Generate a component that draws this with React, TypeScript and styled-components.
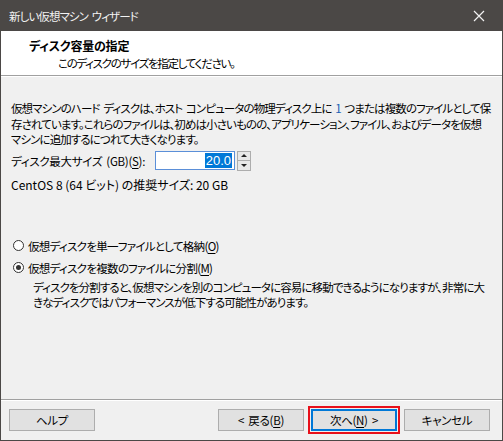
import React, { useState } from 'react';
import styled, { createGlobalStyle } from 'styled-components';

const GlobalStyle = createGlobalStyle`
	html, body {
		margin: 0;
		padding: 0;
		background: #f0f0f0;
	}
	body {
		font-family: "Noto Sans CJK JP", "Liberation Sans", sans-serif;
		font-feature-settings: "palt";
		font-size: 11.5px;
		letter-spacing: -0.9px;
		word-spacing: 2px;
		color: #000;
	}
`;

const Window = styled.div`
	width: 503px;
	height: 441px;
	box-sizing: border-box;
	display: flex;
	flex-direction: column;
	border: 1px solid #4b4846;
	border-top: none;
	background: #f0f0f0;
	overflow: hidden;
`;

const TitleBar = styled.div`
	height: 31px;
	flex: none;
	display: flex;
	align-items: center;
	padding-left: 8px;
	background: #4b4846;
	color: #f2f2f2;
`;

const TitleText = styled.div`
	flex: 1;
`;

const CloseButton = styled.div`
	width: 46px;
	height: 31px;
	display: flex;
	align-items: center;
	justify-content: center;
`;

const Header = styled.div`
	height: 45px;
	flex: none;
	box-sizing: border-box;
	background: #fff;
	border-bottom: 1px solid #a0a0a0;
	box-shadow: 0 1px 0 #fff;
	padding: 6px 0 0 28px;
`;

const HeaderTitle = styled.div`
	font-weight: bold;
	font-size: 12px;
	letter-spacing: -0.2px;
	line-height: 18px;
`;

const HeaderSub = styled.div`
	padding-left: 29px;
	line-height: 17px;
	letter-spacing: -1.3px;
`;

const Body = styled.div`
	flex: 1;
	padding: 25px 10px 0 10px;
	display: flex;
	flex-direction: column;
`;

const Paragraph = styled.div<{ $indent?: number }>`
	line-height: 15.5px;
	white-space: nowrap;
	padding-left: ${({ $indent }) => $indent ?? 0}px;
`;

const SizeRow = styled.div`
	display: flex;
	align-items: center;
	margin-top: 2px;
	height: 22px;
`;

const Label = styled.span`
	width: 144px;
	white-space: nowrap;
	letter-spacing: -0.3px;
`;

const SpinBox = styled.div`
	display: flex;
	align-items: center;
	gap: 2px;
`;

const SpinInput = styled.div`
	width: 80px;
	height: 19px;
	box-sizing: border-box;
	border: 1px solid #5b8fd8;
	background: #fff;
	display: flex;
	align-items: center;
	justify-content: flex-end;
	padding-right: 2px;
`;

const Selected = styled.span`
	background: #0078d7;
	color: #fff;
	font-family: "Liberation Sans", sans-serif;
	font-size: 13px;
	letter-spacing: 0;
	line-height: 15px;
	padding: 0 1px;
`;

const SpinButtons = styled.div`
	width: 14px;
	height: 20px;
	display: flex;
	flex-direction: column;
	border: 1px solid #adadad;
	box-sizing: border-box;
	background: #e8e8e8;
`;

const SpinArrow = styled.div<{ $down?: boolean }>`
	flex: 1;
	display: flex;
	align-items: center;
	justify-content: center;
	${({ $down }) => $down && 'border-top: 1px solid #adadad;'}
	&::after {
		content: '';
		border-left: 3px solid transparent;
		border-right: 3px solid transparent;
		${({ $down }) => ($down ? 'border-top: 3px solid #222;' : 'border-bottom: 3px solid #222;')}
	}
`;

const Recommend = styled.div`
	margin-top: 5px;
	line-height: 16px;
	font-size: 12px;
	letter-spacing: 0;
	word-spacing: 0;
`;

const Options = styled.div`
	margin-top: 45px;
	display: flex;
	flex-direction: column;
	gap: 6px;
`;

const RadioRow = styled.label`
	display: flex;
	align-items: center;
	gap: 4px;
	height: 16px;
	padding-left: 2px;
	letter-spacing: -0.7px;
`;

const RadioDot = styled.span<{ $checked?: boolean }>`
	width: 11px;
	height: 11px;
	box-sizing: border-box;
	border-radius: 50%;
	border: 1px solid #333;
	background: #fff;
	display: flex;
	align-items: center;
	justify-content: center;
	&::after {
		content: '';
		width: 5px;
		height: 5px;
		border-radius: 50%;
		background: ${({ $checked }) => ($checked ? '#333' : 'transparent')};
	}
`;

const Key = styled.span`
	text-decoration: underline;
	text-underline-offset: 2px;
`;

const Note = styled.div`
	margin-top: 4px;
`;

const Footer = styled.div`
	height: 41px;
	flex: none;
	box-sizing: border-box;
	border-top: 1px solid #a0a0a0;
	box-shadow: inset 0 1px 0 #fff;
	display: flex;
	align-items: center;
	padding: 0 12px 0 8px;
`;

const Button = styled.button<{ $default?: boolean }>`
	width: 86px;
	height: 22px;
	box-sizing: border-box;
	font: inherit;
	letter-spacing: -0.3px;
	word-spacing: 2px;
	background: #e1e1e1;
	border: ${({ $default }) => ($default ? '2px solid #0078d7' : '1px solid #adadad')};
	color: #000;
	padding: 0;
	display: flex;
	align-items: center;
	justify-content: center;
	white-space: pre;
`;

const Spacer = styled.div`
	flex: 1;
`;

const Highlight = styled.div`
	border: 2px solid #e8101a;
	padding: 1px;
	margin: 0 4px;
`;

export default function App() {
	const [ split, setSplit ] = useState(true);

	return <>
		<GlobalStyle/>
		<Window>
			<TitleBar>
				<TitleText>新しい仮想マシン ウィザード</TitleText>
				<CloseButton>
					<svg width="12" height="12" viewBox="0 0 12 12">
						<path d="M1 1 L11 11 M11 1 L1 11" stroke="#f2f2f2" strokeWidth="1.2"/>
					</svg>
				</CloseButton>
			</TitleBar>
			<Header>
				<HeaderTitle>ディスク容量の指定</HeaderTitle>
				<HeaderSub>このディスクのサイズを指定してください。</HeaderSub>
			</Header>
			<Body>
				<Paragraph>仮想マシンのハード ディスクは、ホスト コンピュータの物理ディスク上に <span style={{ color: '#1a5fb4' }}>1</span> つまたは複数のファイルとして保</Paragraph>
				<Paragraph>存されています。これらのファイルは、初めは小さいものの、アプリケーション、ファイル、およびデータを仮想</Paragraph>
				<Paragraph>マシンに追加するにつれて大きくなります。</Paragraph>
				<SizeRow>
					<Label>ディスク最大サイズ (GB)(<Key>S</Key>):</Label>
					<SpinBox>
						<SpinInput><Selected>20.0</Selected></SpinInput>
						<SpinButtons>
							<SpinArrow/>
							<SpinArrow $down/>
						</SpinButtons>
					</SpinBox>
				</SizeRow>
				<Recommend>CentOS 8 (64 ビット) の推奨サイズ: 20 GB</Recommend>
				<Options>
					<RadioRow onClick={() => setSplit(false)}>
						<RadioDot $checked={!split}/>
						<span>仮想ディスクを単一ファイルとして格納(<Key>O</Key>)</span>
					</RadioRow>
					<RadioRow onClick={() => setSplit(true)}>
						<RadioDot $checked={split}/>
						<span>仮想ディスクを複数のファイルに分割(<Key>M</Key>)</span>
					</RadioRow>
				</Options>
				<Note>
					<Paragraph $indent={22}>ディスクを分割すると、仮想マシンを別のコンピュータに容易に移動できるようになりますが、非常に大</Paragraph>
					<Paragraph $indent={22}>きなディスクではパフォーマンスが低下する可能性があります。</Paragraph>
				</Note>
			</Body>
			<Footer>
				<Button>ヘルプ</Button>
				<Spacer/>
				<Button>{'< 戻る('}<Key>B</Key>)</Button>
				<Highlight>
					<Button $default>次へ(<Key>N</Key>{') >'}</Button>
				</Highlight>
				<Button>キャンセル</Button>
			</Footer>
		</Window>
	</>;
}
